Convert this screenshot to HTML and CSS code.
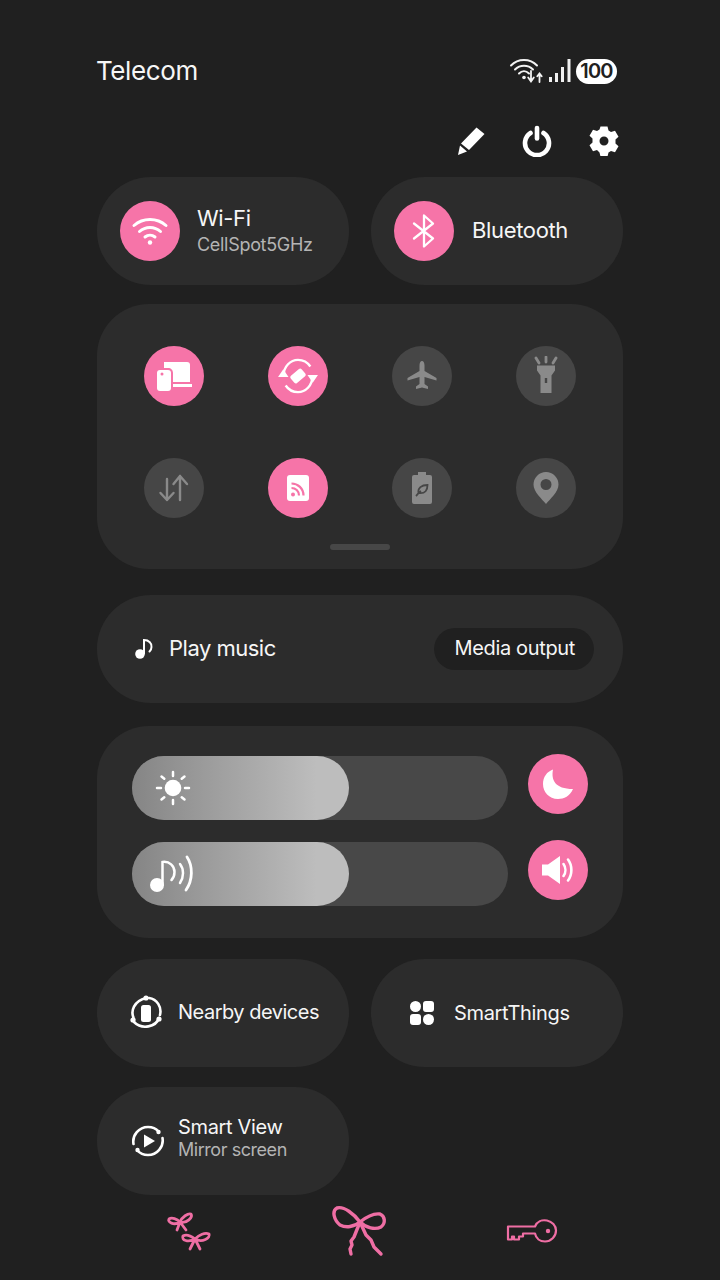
FILE: index.html
```html
<!DOCTYPE html>
<html lang="en">
<head>
<meta charset="utf-8">
<title>Quick panel</title>
<link rel="stylesheet" href="styles.css">
</head>
<body>
<main class="panel">
  <header class="status">
    <span class="carrier">Telecom</span>
    <div class="status-icons">
      <svg width="36" height="28" viewBox="0 0 36 28" fill="none" stroke="#f4f4f4" stroke-linecap="round"><path d="M2 8.500C9 1 21 1 28 8.500" stroke-width="2"/><path d="M6 12.500c5-5 13-5 18 0" stroke-width="2"/><path d="M10 16.500c3-3 7-3 10 0" stroke-width="2"/><circle cx="15" cy="20.500" r="1.800" fill="#f4f4f4" stroke="none"/><path d="M22 14v10m-2.800-3.500 2.800 4 2.800-4M30.500 25v-8.500m-2.200 2.700 2.200-2.700 2.200 2.700" stroke-width="1.800"/></svg>
      <svg width="24" height="26" viewBox="0 0 24 26" fill="#f0f0f0"><rect x="1" y="19" width="3" height="5"/><rect x="7" y="15" width="3" height="9"/><rect x="13" y="9" width="3" height="15"/><rect x="19.500" y="1" width="3" height="23"/></svg>
      <span class="battery">100</span>
    </div>
  </header>

  <div class="actions">
    <svg width="30" height="30" viewBox="-1 0 30 30" fill="#fff"><path d="M20.500 1.500 28.500 8 13 24 5 17.500zM4 19.500l7 6-9 3.500z"/></svg>
    <svg width="32" height="32" viewBox="0 0 32 32" fill="none" stroke="#fff" stroke-width="4.600" stroke-linecap="round"><path d="M9.500 8a12 12 0 1 0 13 0"/><path d="M16 3v10.500"/></svg>
    <svg width="30" height="30" viewBox="0 0 30 30"><path fill="#fff" fill-rule="evenodd" d="M11.500.5h7l1 4 2.500 1.400 4-1.200 3.500 6-3 2.900v3.800l3 2.900-3.500 6-4-1.200-2.500 1.400-1 4h-7l-1-4L8 24.100l-4 1.200-3.500-6 3-2.900v-3.800l-3-2.900 3.500-6 4 1.200 2.500-1.400zM15 10.500a4.500 4.500 0 1 0 0 9 4.500 4.500 0 0 0 0-9z"/></svg>
  </div>

  <section class="two-col">
    <div class="tile tile-primary">
      <span class="dot on">
        <svg width="38" height="30" viewBox="0 0 38 30" fill="none" stroke="#fff" stroke-width="3" stroke-linecap="round"><path d="M3 9.500c9-8 23-8 32 0"/><path d="M8.500 15.500c6-5.500 15-5.500 21 0"/><path d="M14 21c3-2.500 7-2.500 10 0"/><circle cx="19" cy="26.500" r="2.200" fill="#fff" stroke="none"/></svg>
      </span>
      <div class="tile-text lift">
        <span class="title">Wi-Fi</span>
        <span class="sub">CellSpot5GHz</span>
      </div>
    </div>
    <div class="tile tile-primary tile-bt">
      <span class="dot on">
        <svg width="26" height="36" viewBox="0 0 26 36" fill="none" stroke="#fff" stroke-width="2.300" stroke-linecap="round" stroke-linejoin="round"><path d="M3 10.500 22 25.500 13 33.500V2.500l9 8L3 25.500"/></svg>
      </span>
      <div class="tile-text lift"><span class="title">Bluetooth</span></div>
    </div>
  </section>

  <section class="card toggles">
    <div class="toggle-grid">
      <span class="dot on">
        <svg width="40" height="36" viewBox="0 0 40 36"><path fill="#fff" d="M10 4h23a3 3 0 0 1 3 3v17H19v-9c0-3-2-5-5-5h-4V7c0-2 0-3 0-3z"/><rect x="19" y="26" width="19" height="3" fill="#fff"/><rect x="3" y="12" width="14" height="21" rx="3" fill="#fff"/><circle cx="8" cy="16" r="1.500" fill="#f674a8"/></svg>
      </span>
      <span class="dot on">
        <svg width="42" height="38" viewBox="0 0 44 40" fill="none" stroke="#fff" stroke-width="2.500"><path d="M7 19C7 10 14 3 22 3c6 0 10 2.500 13 7"/><path d="M37 21c0 9-7 16-15 16-6 0-10-2.500-13-7"/><path fill="#fff" stroke="none" d="M1 21h11l-5.500-8zM32 19h11l-5.500 8z"/><rect x="14.500" y="15" width="15" height="10" rx="2" fill="#fff" stroke="none" transform="rotate(-40 22 20)"/></svg>
      </span>
      <span class="dot off">
        <svg width="30" height="30" viewBox="0 0 30 30"><path fill="#8a8a8a" d="M15 0c1.500 0 2.500 2 2.500 4.500V10L29.500 17v2.500L17.500 16v7l3.500 2.500V28L15 26.500 9 28v-2.500l3.500-2.500v-7L.5 19.500V17l12-7V4.500C12.500 2 13.500 0 15 0z"/></svg>
      </span>
      <span class="dot off">
        <svg width="30" height="40" viewBox="0 0 30 40"><g stroke="#8a8a8a" stroke-width="2.800" stroke-linecap="round"><path d="M5 2l3 5M15 1v5M25 2l-3 5"/></g><path fill="#8a8a8a" fill-rule="evenodd" d="M6 9.500h18v5l-3.500 5V37h-11V19.500L6 14.500zM13.800 22v5h2.400v-5z"/></svg>
      </span>
      <span class="dot off">
        <svg width="32" height="30" viewBox="0 0 32 30" fill="none" stroke="#8a8a8a" stroke-width="2.400" stroke-linecap="round" stroke-linejoin="round"><path d="M9 6v21M2.500 20 9 27l6.500-7"/><path d="M22 27V3M15.500 11 22 3l7 8"/></svg>
      </span>
      <span class="dot on">
        <svg width="24" height="28" viewBox="0 0 24 28"><rect x="1" y="1" width="22" height="26" rx="3" fill="#fff"/><g fill="none" stroke="#f674a8" stroke-width="2.200"><path d="M5.500 14c4 0 7.500 3 7.500 7.500"/><path d="M5.500 9.500c6.500 0 12 5 12 12"/></g><circle cx="7" cy="20.500" r="2" fill="#f674a8"/></svg>
      </span>
      <span class="dot off">
        <svg width="24" height="34" viewBox="0 0 24 34"><path fill="#8a8a8a" d="M8 1h8v3h4a2 2 0 0 1 2 2v25a2 2 0 0 1-2 2H4a2 2 0 0 1-2-2V6a2 2 0 0 1 2-2h4z"/><path fill="none" stroke="#464646" stroke-width="1.800" d="M6 25c2-2 3-4 5-5M8.500 22c-1-5 3-8 9-8 0 5-2 9-9 8z"/></svg>
      </span>
      <span class="dot off">
        <svg width="26" height="34" viewBox="0 0 26 34"><path fill="#8a8a8a" fill-rule="evenodd" d="M13 1a12.500 12.500 0 0 1 12.500 12.500C25.500 21 17 28 13 33 9 28 .5 21 .5 13.500A12.500 12.500 0 0 1 13 1zm0 7a5.500 5.500 0 1 0 0 11 5.500 5.500 0 0 0 0-11z"/></svg>
      </span>
    </div>
    <div class="handle"></div>
  </section>

  <section class="card media">
    <div class="media-label">
      <svg width="20" height="22" viewBox="0 0 20 22" fill="none"><circle cx="6" cy="16" r="4.800" fill="#fff"/><path d="M10 15.500V2c5 0 8 3.500 7.500 7 0 2-1 3.500-2 4.500" stroke="#fff" stroke-width="2" stroke-linecap="round"/></svg>
      <span class="title lift tighter">Play music</span>
    </div>
    <span class="output-chip">Media output</span>
  </section>

  <section class="card sliders">
    <div class="slider-row">
      <div class="track">
        <div class="fill">
          <svg width="38" height="38" viewBox="0 0 38 38" fill="#fff"><circle cx="19" cy="19" r="8.300"/><g stroke="#fff" stroke-width="2.500" stroke-linecap="round"><path d="M19 3v4M19 31v4M3 19h4M31 19h4M7.500 7.500l2.800 2.300M27.700 28.200l2.800 2.300M30.500 7.500l-2.800 2.300M10.300 28.200l-2.800 2.300"/></g></svg>
        </div>
      </div>
      <span class="dot on">
        <svg width="32" height="32" viewBox="0 0 32 32"><path fill="#fff" d="M11 1.500C9 12 13 21 31 21 28 28 22 31 16 31 7 31 1 24 1 16 1 9 5 3.500 11 1.500z"/></svg>
      </span>
    </div>
    <div class="slider-row">
      <div class="track">
        <div class="fill">
          <svg class="note" width="48" height="40" viewBox="0 0 48 40" fill="none" stroke="#fff" stroke-linecap="round"><circle cx="9" cy="31" r="7" fill="#fff" stroke="none"/><path d="M14.500 31V8c7-1 12 4 12 10 0 3-1 6-3 8" stroke-width="2.500"/><path d="M32 10c4 5 4 13 0 19" stroke-width="2.500"/><path d="M39 3c6 9 6 23-1 33" stroke-width="2.800"/></svg>
        </div>
      </div>
      <span class="dot on">
        <svg width="34" height="30" viewBox="0 0 34 30" fill="none"><path fill="#fff" d="M1 9.500h6L19 1v28L7 20.500H1z"/><path d="M22.500 9c2.500 3.500 2.500 8.500 0 12M27 4.500c4.500 6 4.500 15 0 21" stroke="#fff" stroke-width="2.600" stroke-linecap="round"/></svg>
      </span>
    </div>
  </section>

  <section class="two-col row-nearby">
    <div class="tile tile-small">
      <svg class="tile-icon" width="36" height="36" viewBox="0 0 36 36" fill="none" stroke="#fff" stroke-width="2.600" stroke-linecap="round"><path d="M6 24C2 16 6 6 18 3M31 23c-3 9-17 12-25 4M21 3c8 1 13 9 11 17"/><circle cx="18" cy="3" r="2.600" fill="#fff" stroke="none"/><circle cx="5" cy="25" r="2.600" fill="#fff" stroke="none"/><circle cx="31" cy="24" r="2.600" fill="#fff" stroke="none"/><rect x="13" y="10" width="10" height="17" rx="2.500" fill="#fff" stroke="none"/></svg>
      <span class="title small lift tighter">Nearby devices</span>
    </div>
    <div class="tile tile-small tile-things">
      <svg class="tile-icon" width="26" height="26" viewBox="0 0 26 26" fill="#fff"><circle cx="6.500" cy="6.500" r="5.500"/><rect x="14" y="1" width="11" height="11" rx="3"/><rect x="1" y="14" width="11" height="11" rx="3"/><circle cx="19.500" cy="19.500" r="5.500"/></svg>
      <span class="title small">SmartThings</span>
    </div>
  </section>

  <section class="two-col row-smart">
    <div class="tile tile-small tile-view">
      <svg class="tile-icon" width="34" height="34" viewBox="0 0 34 34" fill="none" stroke="#fff" stroke-width="2.600" stroke-linecap="round"><path d="M2.500 20C1 11 8 3 17 3c4 0 8 1.500 10.500 4.500"/><path d="M31.500 14C33 23 26 31 17 31c-4 0-8-1.500-10.500-4.500"/><circle cx="27.500" cy="8" r="2.200" fill="#fff" stroke="none"/><circle cx="6.500" cy="26" r="2.200" fill="#fff" stroke="none"/><path d="M13 10.500v13l11-6.500z" fill="#fff" stroke="none"/></svg>
      <div class="tile-text tight">
        <span class="title small">Smart View</span>
        <span class="sub narrow">Mirror screen</span>
      </div>
    </div>
  </section>

  <footer class="charms">
    <svg width="48" height="44" viewBox="0 0 48 44" fill="none" stroke="#ef6ea4" stroke-width="2.800" stroke-linecap="round" stroke-linejoin="round"><path d="M14 13c-3-3-8-5-11-3-2 3 5 7 11 3zM14 13c2-5 8-9 11-8 2 3-4 10-11 8zM14 13l-3 8M14 13l6 8"/><path d="M29 30c-4-3-9-5-12-3-2 4 5 7 12 3zM29 30c4-4 10-7 14-5 2 4-7 9-14 5zM29 30l-5 10M29 30l5 10"/></svg>
    <svg width="56" height="52" viewBox="0 0 56 52" fill="none" stroke="#ef6ea4" stroke-width="3.400" stroke-linecap="round" stroke-linejoin="round"><path d="M28 17C22 9 12 1 5 3-.5 6 2 15 8 20c6 3 14 2 20-3z"/><path d="M28 17c5-4 13-9 20-8 5 2 6 9 1 13-6 3-15 1-21-5z"/><path d="M28 17 22 32l-3 4 1 4-2 4 1 5"/><path d="M28 17l6 13 5 5 3 7 7 7"/></svg>
    <svg width="52" height="26" viewBox="0 0 52 26" fill="none" stroke="#ef6ea4" stroke-width="2.200" stroke-linejoin="round"><path d="M2 8.500h27c2-5 7-7 12-6 5 1 9 5 9 10 0 6-5 11-11 11-5 0-9-3-10-8H17v3h-4v3H8v-3H6v3H2z"/><circle cx="42" cy="13" r="2.200" fill="#ef6ea4" stroke="none"/></svg>
  </footer>
</main>
</body>
</html>
```

FILE: styles.css
```css
* { box-sizing: border-box; }
html, body { margin: 0; height: 1280px; overflow: hidden; }
body { background: #202020; color: #fff; font-family: Inter, "Liberation Sans", sans-serif; }
.panel { width: 720px; height: 1280px; padding: 51px 97px 0; display: flex; flex-direction: column; }
.status { display: flex; justify-content: space-between; align-items: center; height: 38px; }
.carrier { font-size: 26px; letter-spacing: -0.4px; color: #f6f6f6; margin-left: -1px; }
.status-icons { display: flex; align-items: center; gap: 3px; margin-right: 6px; padding-top: 2px; }
.battery { background: #fff; color: #202020; font-size: 20px; font-weight: 600; border-radius: 13px; width: 41px; height: 25px; display: flex; align-items: center; justify-content: center; letter-spacing: -0.8px; margin-left: 1px; }
.actions { display: flex; justify-content: flex-end; align-items: center; gap: 36px; margin-top: 35px; height: 34px; padding-right: 4px; }
.two-col { display: grid; grid-template-columns: 252px 252px; gap: 22px; margin-top: 19px; }
.tile { background: #2c2c2c; border-radius: 54px; height: 108px; display: flex; align-items: center; }
.tile-primary { padding-left: 23px; gap: 17px; }
.tile-bt { gap: 18px; }
.tile-small { padding-left: 31px; gap: 14px; }
.tile-things { padding-left: 38px; gap: 19px; }
.tile-view { padding-left: 34px; gap: 13px; }
.tile-text { display: flex; flex-direction: column; gap: 3px; }
.tile-text.tight { gap: 0; margin-bottom: 6px; }
.lift { margin-bottom: 2px; }
.title { font-size: 22px; letter-spacing: -0.35px; color: #f6f6f6; line-height: 26px; }
.title.tighter { letter-spacing: -0.5px; }
.title.small { font-size: 20px; letter-spacing: -0.35px; line-height: 24px; }
.title.small.tighter { letter-spacing: -0.5px; }
.sub { font-size: 18px; letter-spacing: -0.3px; color: #b4b4b4; line-height: 22px; }
.sub.narrow { letter-spacing: -0.45px; }
.dot { width: 60px; height: 60px; border-radius: 50%; display: flex; align-items: center; justify-content: center; flex: none; }
.dot.on { background: #f674a8; }
.dot.off { background: #464646; }
.card { background: #2c2c2c; }
.toggles { margin-top: 19px; height: 265px; border-radius: 52px; padding: 42px 47px 0; }
.toggle-grid { display: grid; grid-template-columns: repeat(4, 60px); grid-auto-rows: 60px; column-gap: 64px; row-gap: 52px; }
.handle { width: 60px; height: 6px; border-radius: 3px; background: #474747; margin: 26px auto 0; }
.media { margin-top: 26px; height: 108px; border-radius: 54px; display: flex; align-items: center; justify-content: space-between; padding: 0 29px 0 37px; }
.media-label { display: flex; align-items: center; gap: 15px; }
.output-chip { background: #202020; border-radius: 21px; height: 42px; padding: 0 19px 2px 21px; display: flex; align-items: center; font-size: 20px; letter-spacing: -0.35px; color: #f6f6f6; }
.sliders { margin-top: 23px; height: 212px; border-radius: 52px; padding: 30px 35px 0; display: flex; flex-direction: column; gap: 22px; }
.slider-row { display: flex; align-items: flex-start; gap: 20px; height: 64px; }
.slider-row .dot { margin-top: -2px; }
.track { width: 376px; height: 64px; border-radius: 32px; background: #484848; }
.fill { width: 217px; height: 64px; border-radius: 32px; background: linear-gradient(90deg, #858585, #bdbdbd 85%); display: flex; align-items: center; padding-left: 22px; }
.note { margin-left: -6px; }
.row-nearby { margin-top: 21px; }
.row-smart { margin-top: 20px; }
.charms { display: flex; align-items: center; margin-top: 8px; height: 56px; padding-left: 69px; gap: 118px; }
```
